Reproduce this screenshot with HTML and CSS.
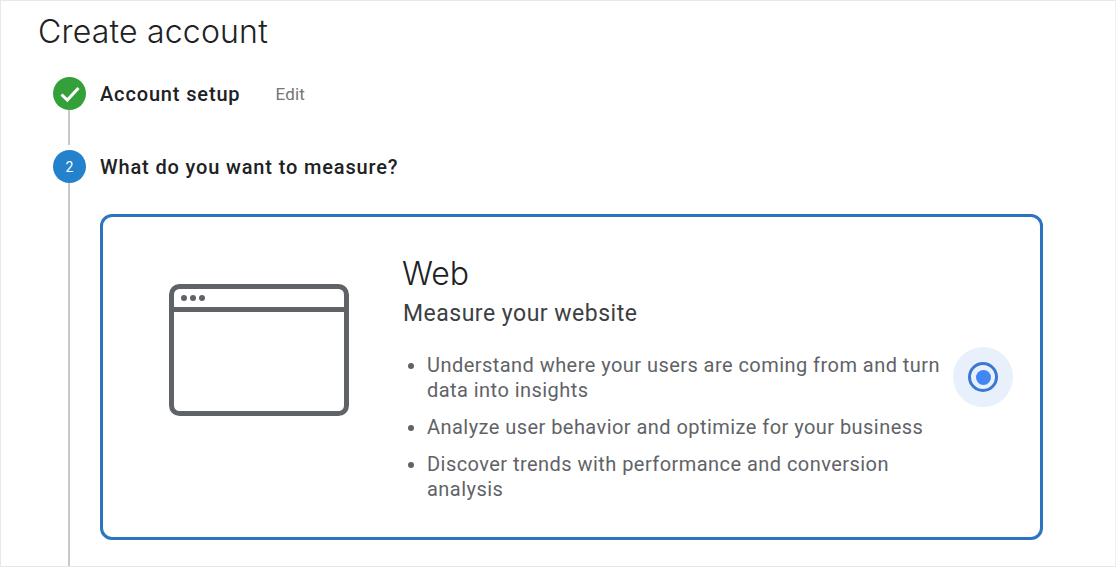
FILE: index.html
```html
<!DOCTYPE html>
<html lang="en">
<head>
  <meta charset="UTF-8">
  <meta name="viewport" content="width=device-width, initial-scale=1.0">
  <title>Create account</title>
  <link rel="stylesheet" href="styles.css">
</head>
<body>
  <div class="page">
    <h1 class="title">Create account</h1>

    <div class="step step-done">
      <div class="rail">
        <div class="badge badge-green">
          <svg width="22" height="18" viewBox="0 0 22 18"><path d="M2.5 9.5 L8.3 15 L19.5 3" fill="none" stroke="#fff" stroke-width="3"/></svg>
        </div>
        <div class="line"></div>
      </div>
      <div class="step-head">
        <span class="step-name">Account setup</span>
        <span class="edit">Edit</span>
      </div>
    </div>

    <div class="step step-current">
      <div class="rail">
        <div class="badge badge-blue">2</div>
        <div class="line"></div>
      </div>
      <div class="step-body">
        <div class="step-head">
          <span class="step-name">What do you want to measure?</span>
        </div>
        <div class="card">
          <div class="card-art">
            <svg width="180" height="132" viewBox="0 0 180 132">
              <rect x="2.5" y="2.5" width="175" height="127" rx="8" fill="none" stroke="#5f6368" stroke-width="5"/>
              <rect x="3" y="23" width="174" height="5" fill="#5f6368"/>
              <circle cx="15" cy="14" r="3" fill="#5f6368"/>
              <circle cx="24" cy="14" r="3" fill="#5f6368"/>
              <circle cx="33" cy="14" r="3" fill="#5f6368"/>
            </svg>
          </div>
          <div class="card-text">
            <h2 class="card-title">Web</h2>
            <p class="card-sub">Measure your website</p>
            <ul class="points">
              <li>Understand where your users are coming from and turn data into insights</li>
              <li>Analyze user behavior and optimize for your business</li>
              <li>Discover trends with performance and conversion analysis</li>
            </ul>
          </div>
          <div class="radio-wrap">
            <div class="radio"><div class="radio-dot"></div></div>
          </div>
        </div>
      </div>
    </div>
  </div>
</body>
</html>
```

FILE: styles.css
```css
html, body {
  height: 100%;
}
body {
  margin: 0;
  background: #fff;
  font-family: Roboto, "Liberation Sans", sans-serif;
  color: #202124;
  overflow: hidden;
}
.page {
  box-sizing: border-box;
  height: 567px;
  padding: 11px 0 0 37px;
  border: 1px solid #e8e8e8;
  border-right-color: #f0f0f0;
  display: flex;
  flex-direction: column;
}
.title {
  margin: 0 0 22px;
  height: 43px;
  font-size: 32px;
  line-height: 40px;
  font-weight: 300;
  font-family: Inter, Roboto, sans-serif;
  letter-spacing: 0.2px;
  color: #202124;
}
.step {
  display: flex;
  gap: 14px;
}
.step-done {
  height: 73px;
}
.step-current {
  flex: 1;
  min-height: 0;
}
.rail {
  margin-left: 15px;
  width: 33px;
  display: flex;
  flex-direction: column;
  align-items: center;
}
.badge {
  flex: none;
  width: 33px;
  height: 33px;
  border-radius: 50%;
  display: flex;
  align-items: center;
  justify-content: center;
  color: #fff;
  font-size: 14px;
}
.badge-green {
  background: #34a03a;
}
.badge-blue {
  background: #2481cc;
}
.line {
  width: 2px;
  margin-right: 1px;
  background: #c8c8c8;
  flex: 1;
}
.step-done .line {
  margin-bottom: 5px;
}
.step-head {
  display: flex;
  align-items: center;
  height: 33px;
}
.step-name {
  font-size: 20px;
  font-weight: 500;
  letter-spacing: 0.85px;
  color: #202124;
}
.edit {
  margin-left: 35px;
  padding-top: 1px;
  font-size: 17px;
  letter-spacing: 0.2px;
  color: #757575;
}
.step-body {
  flex: 1;
  min-width: 0;
}
.card {
  box-sizing: border-box;
  margin-top: 31px;
  width: 943px;
  height: 326px;
  border: 3px solid #2a74c0;
  border-radius: 12px;
  display: flex;
}
.card-art {
  flex: none;
  width: 300px;
  padding: 67px 0 0 66px;
  box-sizing: border-box;
}
.card-text {
  flex: none;
  width: 550px;
  padding-top: 38px;
  box-sizing: border-box;
}
.card-title {
  margin: 0 0 0 -1px;
  font-size: 32px;
  line-height: 38px;
  font-weight: 300;
  font-family: Inter, Roboto, sans-serif;
  letter-spacing: 0;
}
.card-sub {
  margin: 6px 0 0;
  font-size: 23px;
  line-height: 30px;
  letter-spacing: 0.5px;
  color: #3c4043;
}
.points {
  margin: 24px 0 0;
  padding: 0 0 0 24px;
  width: 525px;
  color: #5f6368;
  font-size: 20px;
  line-height: 25px;
  letter-spacing: 0.45px;
}
.points li {
  margin-bottom: 12px;
}
.radio-wrap {
  flex: 1;
  display: flex;
  padding-top: 130px;
}
.radio {
  width: 60px;
  height: 60px;
  border-radius: 50%;
  background: #e8f0fb;
  display: flex;
  align-items: center;
  justify-content: center;
  position: relative;
}
.radio::before {
  content: "";
  position: absolute;
  width: 30px;
  height: 30px;
  box-sizing: border-box;
  border: 3px solid #3b78d0;
  border-radius: 50%;
}
.radio-dot {
  width: 15px;
  height: 15px;
  border-radius: 50%;
  background: #4285f4;
}
```
